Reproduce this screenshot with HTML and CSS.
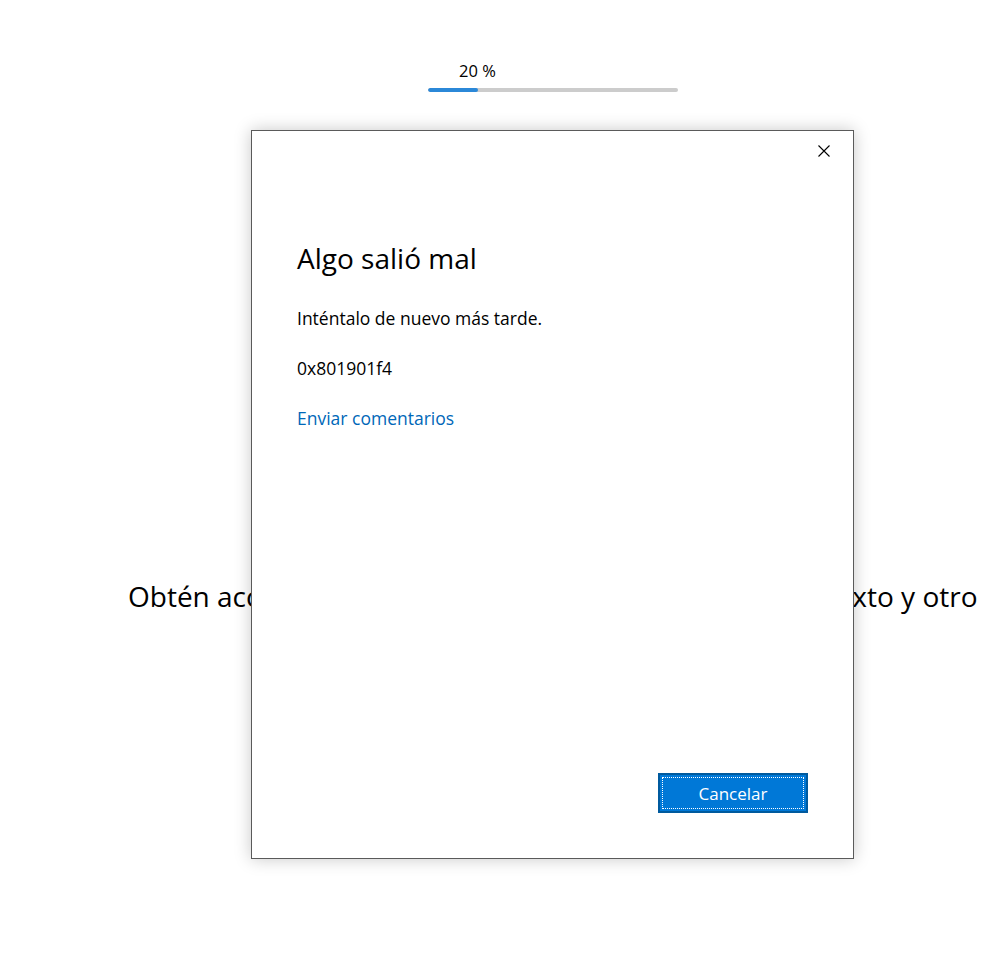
FILE: index.html
```html
<!DOCTYPE html>
<html lang="es">
<head>
<meta charset="utf-8">
<title>Algo salió mal</title>
<link rel="stylesheet" href="styles.css">
</head>
<body>
<div class="page">
  <div class="progress">
    <div class="progress-label">20 %</div>
    <div class="progress-track"><div class="progress-fill" style="width:20%"></div></div>
  </div>
  <div class="backline">Obtén acceso a tus fotos, música, los documentos de texto y otro</div>
</div>
<div class="dialog">
  <button class="close" aria-label="Cerrar">
    <svg width="12" height="12" viewBox="0 0 12 12"><path d="M0.5 0.5 L11.5 11.5 M11.5 0.5 L0.5 11.5" stroke="#000" stroke-width="1.1" fill="none"/></svg>
  </button>
  <div class="dialog-body">
    <h1 class="title">Algo salió mal</h1>
    <p class="text">Inténtalo de nuevo más tarde.</p>
    <p class="text">0x801901f4</p>
    <a class="link" href="#">Enviar comentarios</a>
  </div>
  <div class="dialog-footer">
    <button class="btn"><span class="btn-inner">Cancelar</span></button>
  </div>
</div>
</body>
</html>
```
FILE: styles.css
```css
html, body {
  margin: 0;
  padding: 0;
  background: #fff;
  font-family: "Open Sans", "Noto Sans", sans-serif;
  color: #000;
}
.page {
  width: 988px;
  height: 972px;
  overflow: hidden;
  position: relative;
}
.progress {
  width: 250px;
  margin: 61px 0 0 428px;
}
.progress-label {
  font-size: 16.5px;
  line-height: 20px;
  padding-left: 31px;
}
.progress-track {
  margin-top: 7px;
  height: 4px;
  border-radius: 2px;
  background: #cccccc;
  overflow: hidden;
}
.progress-fill {
  height: 100%;
  background: #2b88d8;
  border-radius: 2px;
}
.backline {
  margin-top: 486px;
  margin-left: 128px;
  font-size: 28px;
  line-height: 36px;
  white-space: nowrap;
}
.dialog {
  position: absolute;
  left: 251px;
  top: 130px;
  width: 601px;
  height: 727px;
  border: 1px solid #5a5a5a;
  background: #fff;
  box-shadow: 0 0 16px rgba(0,0,0,0.22);
  display: flex;
  flex-direction: column;
}
.close {
  position: absolute;
  right: 23px;
  top: 14px;
  width: 12px;
  height: 12px;
  padding: 0;
  border: 0;
  background: none;
  display: flex;
}
.dialog-body {
  flex: 1;
  padding: 109px 45px 0 45px;
  display: flex;
  flex-direction: column;
  align-items: flex-start;
}
.title {
  margin: 0;
  font-weight: 400;
  font-size: 28px;
  line-height: 36px;
}
.text {
  margin: 26px 0 0 0;
  font-size: 17.5px;
  line-height: 32px;
}
.text + .text {
  margin-top: 18px;
}
.link {
  margin-top: 18px;
  font-size: 17.5px;
  line-height: 32px;
  color: #0067b8;
  text-decoration: none;
}
.dialog-footer {
  display: flex;
  justify-content: flex-end;
  padding: 0 45px 45px 0;
}
.btn {
  width: 150px;
  height: 40px;
  padding: 2px;
  border: 2px solid #005a9e;
  background: #0078d7;
  display: flex;
  box-sizing: border-box;
}
.btn-inner {
  flex: 1;
  border: 1px dotted #fff;
  color: #fff;
  font-family: "Open Sans", "Noto Sans", sans-serif;
  font-size: 17px;
  display: flex;
  align-items: center;
  justify-content: center;
}
```
